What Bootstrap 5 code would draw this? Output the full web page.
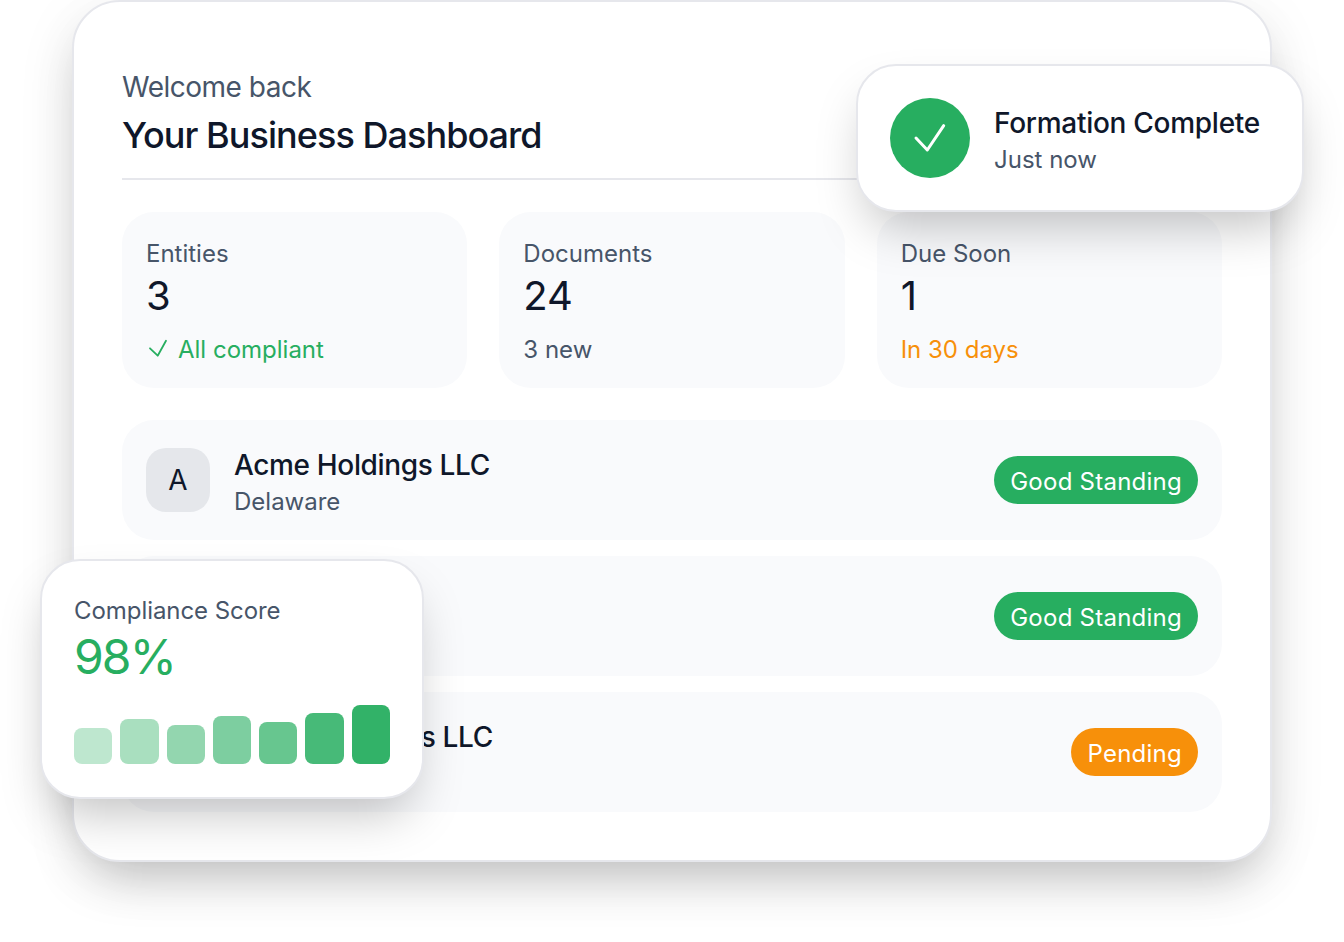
<!DOCTYPE html>
<html>
<head>
    <meta charset="utf-8">
    <title>Your Business Dashboard</title>
    <link rel="stylesheet" href="https://cdn.jsdelivr.net/npm/bootstrap@5.3.0/dist/css/bootstrap.min.css">
    <style>
        body { background: #fff; font-family: Inter, "Liberation Sans", sans-serif; color: #0f172a; overflow: hidden; }
        .stage { position: relative; width: 1344px; height: 942px; padding-left: 72px; }
        .dash-panel { width: 1200px; height: 862px; padding: 48px; background: #fff; border: 2px solid #e6e7ec; border-radius: 48px; box-shadow: 0 25px 50px -12px rgba(0,0,0,.25), 0 10px 70px rgba(0,0,0,.05); }
        .dash-head { height: 130px; padding-top: 17px; border-bottom: 2px solid #e6e7ec; margin-bottom: 32px; }
        .hello { font-size: 28px; line-height: 40px; color: #475569; letter-spacing: -.5px; }
        .dash-title { font-size: 36px; line-height: 56px; font-weight: 500; margin: 0; color: #0f172a; letter-spacing: -.95px; }
        .stat-grid { display: grid; grid-template-columns: repeat(3, 1fr); gap: 32px; margin-bottom: 32px; }
        .stat-box { height: 176px; padding: 26px 24px 0; background: #f9fafc; border-radius: 32px; }
        .stat-label { font-size: 24px; line-height: 32px; color: #475569; }
        .stat-num { font-size: 40px; line-height: 52px; color: #0f172a; }
        .stat-note { font-size: 24px; line-height: 32px; margin-top: 12px; color: #475569; }
        .txt-green { color: #27ae60; }
        .txt-amber { color: #f7900a; }
        .entity-list { gap: 16px; }
        .entity-row { height: 120px; padding: 0 24px; background: #f9fafc; border-radius: 32px; }
        .entity-avatar { width: 64px; height: 64px; border-radius: 20px; background: #e5e7eb; font-size: 28px; color: #0f172a; margin-right: 24px; }
        .entity-name { font-size: 28px; line-height: 36px; font-weight: 500; color: #0f172a; letter-spacing: -.35px; padding-top: 4px; }
        .entity-sub { font-size: 24px; line-height: 32px; color: #475569; margin-top: 3px; }
        .status-pill { font-size: 24px; line-height: 36px; font-weight: 400; padding: 8px 16px 4px; color: #fff; border-radius: 24px; letter-spacing: .25px; }
        .pill-green { background: #27ae60; }
        .pill-amber { background: #f7900a; }
        .float-box { position: absolute; background: #fff; border: 2px solid #e6e7ec; border-radius: 40px; padding: 32px; box-shadow: 0 25px 50px -12px rgba(0,0,0,.25); }
        .float-done { left: 856px; top: 64px; width: 448px; height: 148px; }
        .done-circle { width: 80px; height: 80px; border-radius: 50%; background: #27ae60; margin-right: 24px; }
        .done-title { font-size: 28px; line-height: 36px; font-weight: 500; color: #0f172a; letter-spacing: -.28px; padding-top: 6px; }
        .done-sub { font-size: 24px; line-height: 36px; color: #475569; padding-top: 1px; }
        .float-score { left: 40px; top: 559px; width: 384px; height: 240px; }
        .score-label { font-size: 24px; line-height: 32px; color: #475569; padding-top: 2px; letter-spacing: -.06px; }
        .score-num { font-size: 48px; line-height: 60px; color: #27ae60; letter-spacing: -1.9px; }
        .score-bars { height: 60px; gap: 8px; margin-top: 17px; }
        .score-bar { flex: 1; background: #27ae60; border-radius: 8px; }
    </style>
</head>
<body>
    <div class="stage">
        <div class="dash-panel">
            <div class="dash-head">
                <div class="hello">Welcome back</div>
                <h1 class="dash-title">Your Business Dashboard</h1>
            </div>
            <div class="stat-grid">
                <div class="stat-box">
                    <div class="stat-label">Entities</div>
                    <div class="stat-num">3</div>
                    <div class="stat-note txt-green d-flex align-items-center gap-2">
                        <svg width="24" height="24" viewBox="0 0 24 24" fill="none" stroke="#27ae60" stroke-width="1.8" stroke-linecap="round" stroke-linejoin="round"><path d="M4 10.3l7.7 7.4L20 2.7"/></svg>
                        All compliant
                    </div>
                </div>
                <div class="stat-box">
                    <div class="stat-label">Documents</div>
                    <div class="stat-num">24</div>
                    <div class="stat-note">3 new</div>
                </div>
                <div class="stat-box">
                    <div class="stat-label">Due Soon</div>
                    <div class="stat-num">1</div>
                    <div class="stat-note txt-amber">In 30 days</div>
                </div>
            </div>
            <div class="d-flex flex-column entity-list">
                <div class="entity-row d-flex align-items-center justify-content-between">
                    <div class="d-flex align-items-center">
                        <div class="entity-avatar d-flex align-items-center justify-content-center">A</div>
                        <div>
                            <div class="entity-name">Acme Holdings LLC</div>
                            <div class="entity-sub">Delaware</div>
                        </div>
                    </div>
                    <span class="badge status-pill pill-green">Good Standing</span>
                </div>
                <div class="entity-row d-flex align-items-center justify-content-between">
                    <div class="d-flex align-items-center">
                        <div class="entity-avatar d-flex align-items-center justify-content-center">T</div>
                        <div>
                            <div class="entity-name">TechStart Inc.</div>
                            <div class="entity-sub">Wyoming</div>
                        </div>
                    </div>
                    <span class="badge status-pill pill-green">Good Standing</span>
                </div>
                <div class="entity-row d-flex align-items-center justify-content-between">
                    <div class="d-flex align-items-center">
                        <div class="entity-avatar d-flex align-items-center justify-content-center">G</div>
                        <div>
                            <div class="entity-name">Global Partners LLC</div>
                            <div class="entity-sub">Nevada</div>
                        </div>
                    </div>
                    <span class="badge status-pill pill-amber">Pending</span>
                </div>
            </div>
        </div>

        <div class="float-box float-done d-flex align-items-center">
            <div class="done-circle d-flex align-items-center justify-content-center flex-shrink-0">
                <svg width="40" height="40" viewBox="0 0 40 40" fill="none" stroke="#fff" stroke-width="3" stroke-linecap="round" stroke-linejoin="round"><path d="M6 20l11.3 12L33.7 7.7"/></svg>
            </div>
            <div>
                <div class="done-title">Formation Complete</div>
                <div class="done-sub">Just now</div>
            </div>
        </div>

        <div class="float-box float-score">
            <div class="score-label">Compliance Score</div>
            <div class="score-num">98%</div>
            <div class="score-bars d-flex align-items-end">
                <div class="score-bar" style="height:36px;opacity:.3"></div>
                <div class="score-bar" style="height:45px;opacity:.4"></div>
                <div class="score-bar" style="height:39px;opacity:.5"></div>
                <div class="score-bar" style="height:48px;opacity:.6"></div>
                <div class="score-bar" style="height:42px;opacity:.7"></div>
                <div class="score-bar" style="height:51px;opacity:.85"></div>
                <div class="score-bar" style="height:59px;opacity:.95"></div>
            </div>
        </div>
    </div>
    <script src="https://cdn.jsdelivr.net/npm/bootstrap@5.3.0/dist/js/bootstrap.bundle.min.js"></script>
</body>
</html>
